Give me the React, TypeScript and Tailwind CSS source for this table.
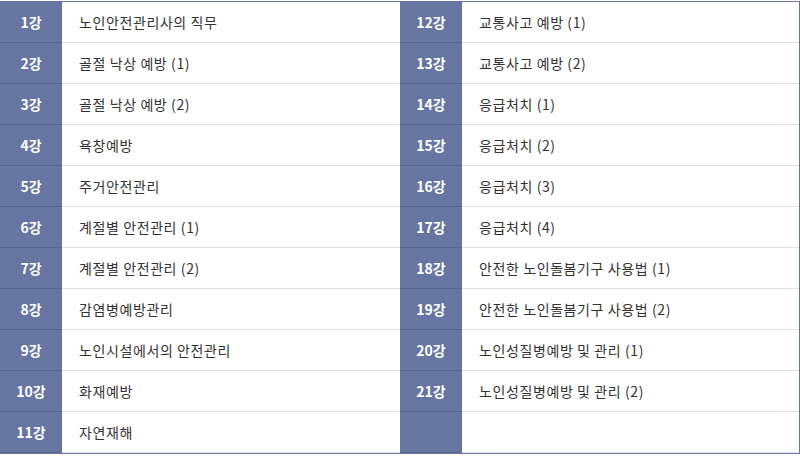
import React from "react";

const left = [
  "노인안전관리사의 직무",
  "골절 낙상 예방 (1)",
  "골절 낙상 예방 (2)",
  "욕창예방",
  "주거안전관리",
  "계절별 안전관리 (1)",
  "계절별 안전관리 (2)",
  "감염병예방관리",
  "노인시설에서의 안전관리",
  "화재예방",
  "자연재해",
];
const right = [
  "교통사고 예방 (1)",
  "교통사고 예방 (2)",
  "응급처치 (1)",
  "응급처치 (2)",
  "응급처치 (3)",
  "응급처치 (4)",
  "안전한 노인돌봄기구 사용법 (1)",
  "안전한 노인돌봄기구 사용법 (2)",
  "노인성질병예방 및 관리 (1)",
  "노인성질병예방 및 관리 (2)",
  "",
];

function Th({ label }: { label: string }) {
  return (
    <div className="h-[41px] bg-[#6675a1] border-b border-[#56648e] flex items-center justify-center text-white font-bold text-[14px]">
      {label}
    </div>
  );
}
function Td({ label }: { label: string }) {
  return (
    <div className="h-[41px] bg-white border-b border-[#dfdfe6] flex items-center pl-[17px] text-[#333] text-[14px] tracking-[0.6px]">
      {label}
    </div>
  );
}

export default function App() {
  return (
    <div className="w-[800px] h-[457px] bg-white pt-px" style={{ fontFamily: '"Noto Sans CJK KR", "Noto Sans", sans-serif' }}>
      <div className="border-t border-r border-b border-[#6675a1] grid grid-cols-[62px_338px_62px_1fr]">
        {left.map((l, i) => (
          <React.Fragment key={i}>
            <Th label={`${i + 1}강`} />
            <Td label={l} />
            <Th label={right[i] ? `${i + 12}강` : ""} />
            <Td label={right[i]} />
          </React.Fragment>
        ))}
      </div>
    </div>
  );
}
